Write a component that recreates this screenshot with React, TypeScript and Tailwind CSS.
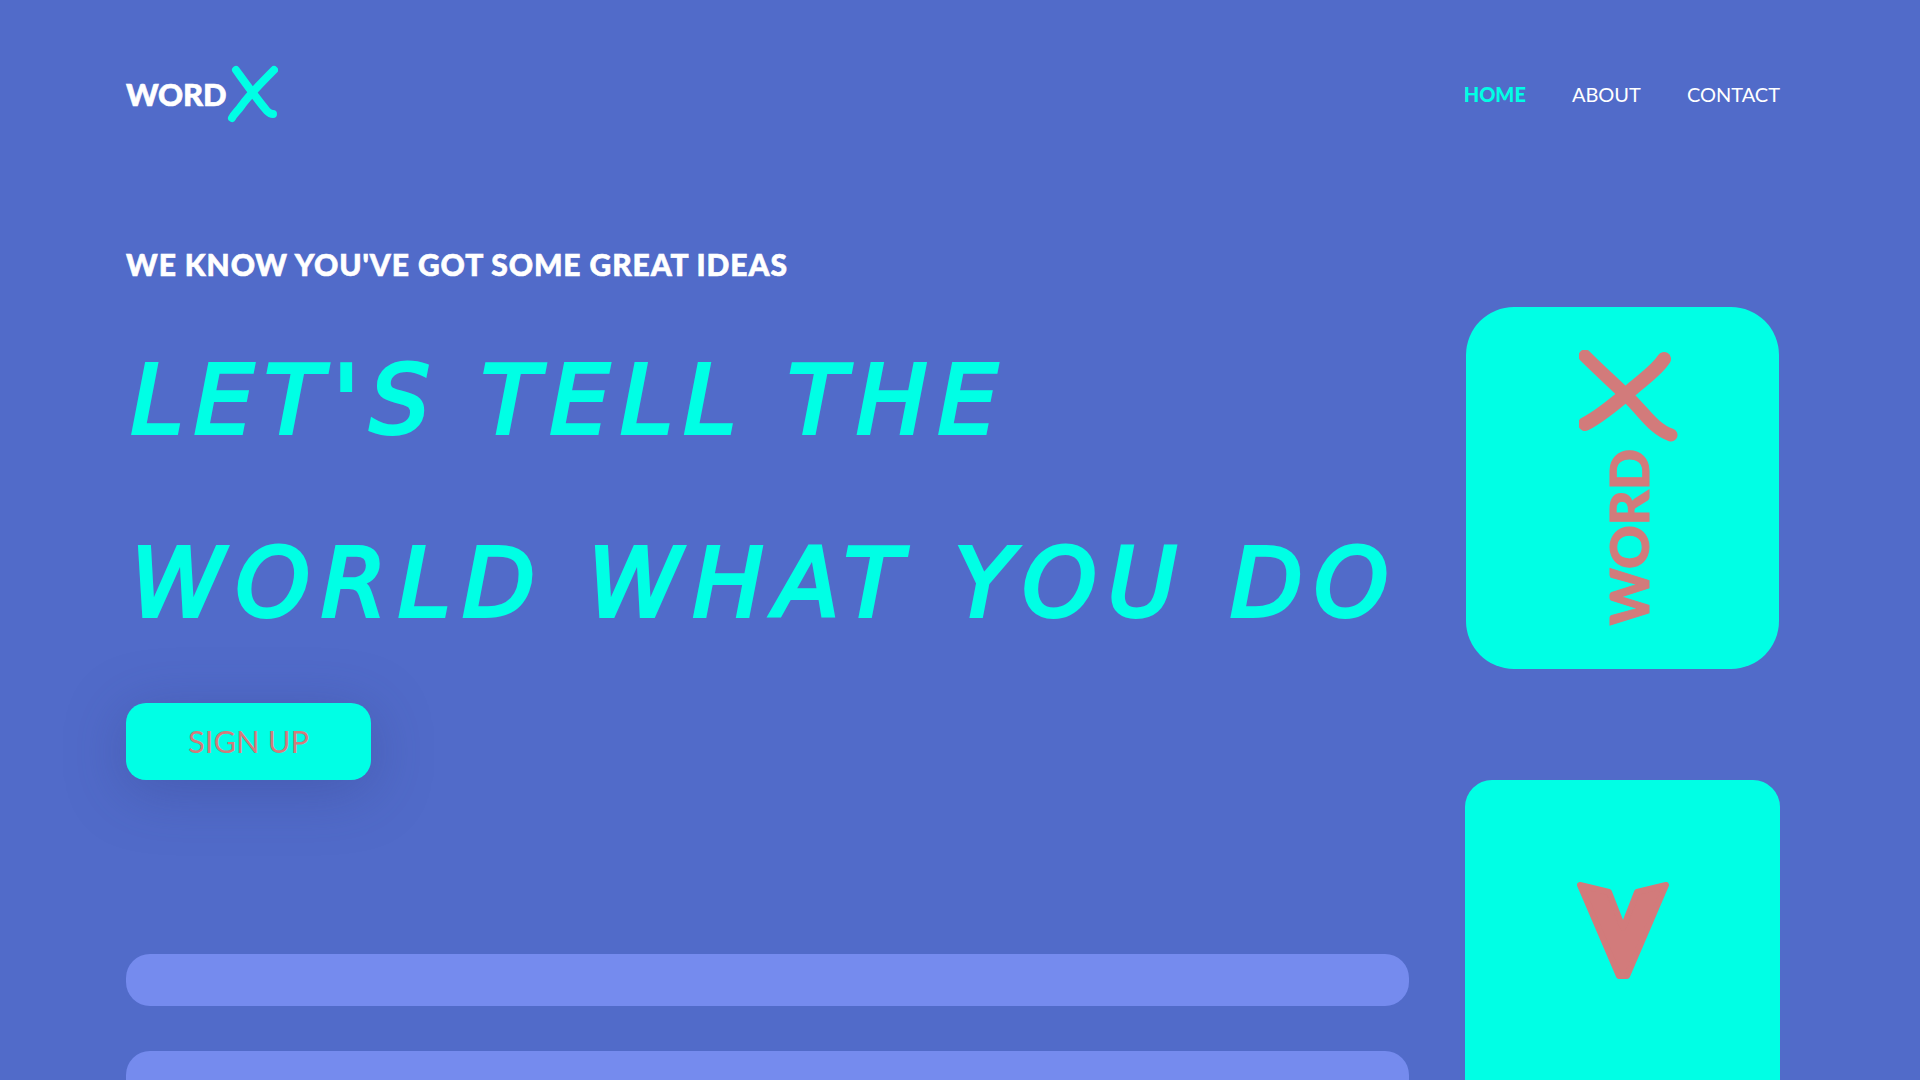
import React from 'react';

const navItems = [
  { label: 'HOME', className: 'font-black text-[#00ffe5]' },
  { label: 'ABOUT', className: 'font-normal text-white' },
  { label: 'CONTACT', className: 'font-normal text-white' },
];

function Logo() {
  return (
    <div className="flex items-end">
      <span className="text-[31px] leading-none font-black text-white tracking-[-0.2px] mb-[14px] [-webkit-text-stroke:0.6px_#ffffff]">WORD</span>
      <svg viewBox="0 0 52 60" className="w-[52px] h-[60px]" fill="none" stroke="#00ffe5" strokeWidth="8" strokeLinecap="round">
        <path d="M10 6 C18 17 30 34 41 47 C43 49 45 50 47 50" />
        <path d="M48 6 C36 18 24 30 16 41 C12 47 8 50 6 54" />
      </svg>
    </div>
  );
}

export default function App() {
  return (
    <div className="h-screen overflow-hidden bg-[#516bc9] pl-[126px] pr-[140px] font-['Lato',sans-serif]">
      <header className="flex h-[188px] items-center justify-between">
        <Logo />
        <nav className="flex items-center gap-[46px] text-[20px]">
          {navItems.map((item) => (
            <a key={item.label} className={item.className}>{item.label}</a>
          ))}
        </nav>
      </header>

      <div className="flex justify-between">
        <main className="w-[1283px] pt-[58px]">
          <h3 className="text-[30px] leading-[36px] font-black tracking-[0.9px] text-white [-webkit-text-stroke:0.6px_#ffffff]">WE KNOW YOU'VE GOT SOME GREAT IDEAS</h3>
          <h1 className="mt-[27px] pl-[5px] font-['DejaVu_Sans',cursive] text-[94px] leading-[183px] font-normal italic whitespace-nowrap text-[#00ffe5] [-webkit-text-stroke:4px_#00ffe5]">
            <div className="tracking-[11px]">LET'S TELL THE</div>
            <div className="tracking-[11.7px]">WORLD WHAT YOU DO</div>
          </h1>
          <button className="mt-[28px] block h-[77px] w-[245px] rounded-[20px] bg-[#00ffe5] text-[31px] text-[#d27b7b] shadow-[0_10px_60px_rgba(50,60,130,0.35)]">
            SIGN UP
          </button>
          <div className="mt-[174px] h-[52px] rounded-[24px] bg-[#758bee]" />
          <div className="mt-[45px] h-[52px] rounded-[24px] bg-[#758bee]" />
        </main>

        <aside className="w-[315px] shrink-0 pt-[119px]">
          <div className="mx-auto flex h-[362px] w-[313px] flex-col items-center rounded-[48px] bg-[#00ffe5] pt-[43px]">
            <svg viewBox="0 0 100 94" className="w-[100px] h-[94px] translate-x-[6px]" fill="none" stroke="#d27b7b" strokeLinecap="round">
              <path d="M6 6 C22 22 38 36 52 50 C66 64 76 80 92 85" strokeWidth="13" />
              <path d="M85 9 C78 20 66 28 52 40 C38 52 22 66 6 74" strokeWidth="14" />
            </svg>
            <span className="mt-[5px] text-[54px] leading-none font-black text-[#d27b7b] [writing-mode:vertical-rl] rotate-180 translate-x-[6px] [-webkit-text-stroke:1px_#d27b7b]">WORD</span>
          </div>
          <div className="mt-[111px] flex h-[400px] flex-col items-center rounded-[27px] bg-[#00ffe5] pt-[102px]">
            <svg viewBox="0 0 92 97" className="w-[92px] h-[97px] text-[#d27b7b]" fill="currentColor" stroke="currentColor" strokeWidth="6" strokeLinejoin="round">
              <polygon points="3,3 32,10 46,46 60,10 89,3 50,94 42,94" />
            </svg>
          </div>
        </aside>
      </div>
    </div>
  );
}
